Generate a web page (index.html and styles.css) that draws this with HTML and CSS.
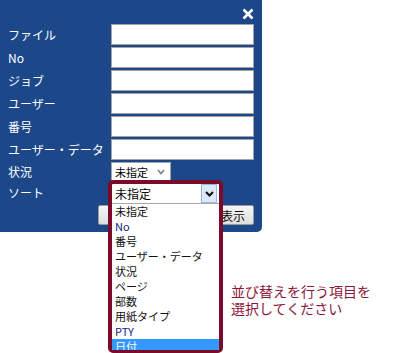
FILE: index.html
```html
<!DOCTYPE html>
<html lang="ja">
  <head>
    <meta charset="UTF-8" />
    <meta name="viewport" content="width=device-width, initial-scale=1.0" />
    <title>検索条件</title>
    <link rel="stylesheet" href="styles.css">
  </head>
  <body>
    <div class="panel">
      <div class="close-row">
        <svg class="close" width="12" height="12" viewBox="0 0 12 12">
          <path d="M1.5 1.5 L10.5 10.5 M10.5 1.5 L1.5 10.5" stroke="#fff" stroke-width="2.6" />
        </svg>
      </div>
      <div class="form">
        <label class="label">ファイル</label>
        <input class="field" type="text" />
        <label class="label">No</label>
        <input class="field" type="text" />
        <label class="label">ジョブ</label>
        <input class="field" type="text" />
        <label class="label">ユーザー</label>
        <input class="field" type="text" />
        <label class="label">番号</label>
        <input class="field" type="text" />
        <label class="label">ユーザー・データ</label>
        <input class="field" type="text" />
        <label class="label">状況</label>
        <div class="combo">
          <span>未指定</span>
          <svg width="8" height="6" viewBox="0 0 8 6">
            <path d="M1 1 L4 4.5 L7 1" stroke="#888" stroke-width="1.8" fill="none" />
          </svg>
        </div>
        <label class="label">ソート</label>
        <div class="sort-slot"></div>
        <div class="buttons">
          <button class="button button-wide"></button>
          <button class="button">再表示</button>
        </div>
      </div>
    </div>

    <div class="sort-open">
      <div class="sort-box">
        <span>未指定</span>
        <div class="sort-arrow">
          <svg width="9" height="6" viewBox="0 0 9 6">
            <path d="M1 1 L4.5 4.5 L8 1" stroke="#111" stroke-width="2" fill="none" />
          </svg>
        </div>
      </div>
      <ul class="sort-list">
        <li>未指定</li>
        <li class="latin">No</li>
        <li>番号</li>
        <li>ユーザー・データ</li>
        <li>状況</li>
        <li>ページ</li>
        <li>部数</li>
        <li>用紙タイプ</li>
        <li class="latin">PTY</li>
        <li class="selected">日付</li>
      </ul>
    </div>

    <p class="hint">並び替えを行う項目を<br />選択してください</p>
  </body>
</html>
```

FILE: styles.css
```css
body {
  margin: 0;
  background: #fff;
  font-family: "Noto Sans CJK JP", "Noto Sans", sans-serif;
}
.panel {
  width: 262px;
  height: 232px;
  box-sizing: border-box;
  padding: 6px 8px 0 8px;
  background: #1c4889;
  border-bottom-right-radius: 5px;
}
.close-row {
  height: 18px;
  display: flex;
  justify-content: flex-end;
}
.close {
  margin-top: 2px;
}
.form {
  display: grid;
  grid-template-columns: 103px 143px;
  grid-auto-rows: auto;
  row-gap: 2px;
}
.label {
  color: #fff;
  font-size: 12px;
  line-height: 14px;
  align-self: center;
  white-space: nowrap;
}
.field {
  height: 21px;
  box-sizing: border-box;
  margin: 0;
  border: 1px solid #a3a3a3;
  background: #fff;
}
.combo {
  width: 60px;
  height: 19px;
  box-sizing: border-box;
  border: 1px solid #a3a3a3;
  background: #fff;
  display: flex;
  align-items: center;
  justify-content: space-between;
  padding: 0 5px 0 3px;
  font-size: 11px;
}
.sort-slot {
  height: 20px;
}
.buttons {
  grid-column: 1 / -1;
  display: flex;
  justify-content: flex-end;
  gap: 4px;
}
.button {
  width: 54px;
  height: 20px;
  padding: 0;
  font-family: inherit;
  font-size: 12px;
  color: #111;
  border: 1px solid #9a9a9a;
  border-radius: 2px;
  background: linear-gradient(#f6f6f6, #dedede);
}
.button-wide {
  width: 98px;
}
.sort-open {
  position: absolute;
  left: 108px;
  top: 180px;
  width: 115px;
  height: 173px;
  box-sizing: border-box;
  border: 4px solid #7b0b2b;
  border-bottom-width: 3px;
  border-radius: 5px;
  background: #fff;
  overflow: hidden;
}
.sort-box {
  height: 19px;
  display: flex;
  align-items: center;
  justify-content: space-between;
  padding-left: 3px;
  padding-right: 2px;
  font-size: 12px;
}
.sort-arrow {
  width: 16px;
  height: 19px;
  box-sizing: border-box;
  border: 1px solid #93b9e0;
  background: #dbe9f8;
  display: flex;
  align-items: center;
  justify-content: center;
}
.sort-list {
  list-style: none;
  margin: 0;
  padding: 0;
  border-top: 1px solid #a8a8a8;
}
.sort-list li {
  height: 15px;
  line-height: 15px;
  padding-left: 3px;
  font-size: 11px;
  color: #111;
  white-space: nowrap;
}
.sort-list .latin {
  color: #14207e;
}
.sort-list .selected {
  background: #3399ff;
  color: #fff;
}
.hint {
  margin: 51px 0 0 231px;
  font-size: 14px;
  line-height: 17px;
  color: #8b1538;
}
```
